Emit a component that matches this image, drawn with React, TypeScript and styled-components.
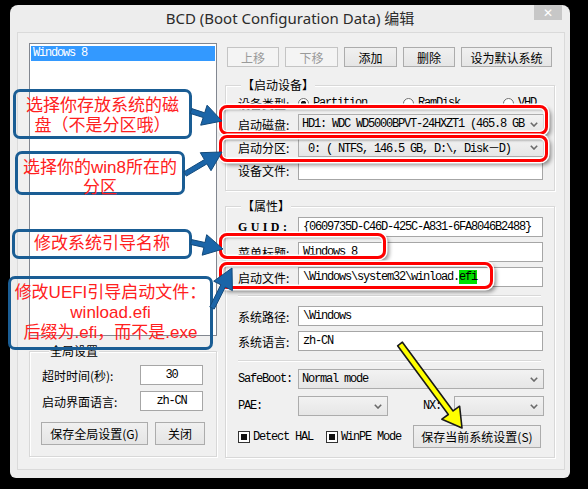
import styled, { createGlobalStyle } from "styled-components";

const cjk = `"Noto Sans CJK SC", "Noto Sans", sans-serif`;
const mono = `"Liberation Mono", "Noto Sans CJK SC", monospace`;

const GlobalStyle = createGlobalStyle`
  html, body {
    margin: 0;
    padding: 0;
    background: #000;
  }
  body {
    width: 588px;
    height: 489px;
    overflow: hidden;
    font-family: ${cjk};
  }
`;

const Stage = styled.div`
  position: relative;
  width: 588px;
  height: 489px;
  padding: 5px 0 0 10px;
  box-sizing: border-box;
  background: #000;
`;

const Window = styled.div`
  width: 560px;
  height: 473px;
  box-sizing: border-box;
  background: #ededed;
  border-radius: 8px 8px 6px 6px;
  display: flex;
  flex-direction: column;
`;

const TitleBar = styled.div`
  height: 27px;
  display: grid;
  grid-template-columns: 1fr auto 1fr;
  align-items: start;
`;

const Title = styled.div`
  grid-column: 2;
  padding-top: 3px;
  font-family: "Noto Sans", "Noto Sans CJK SC", sans-serif;
  font-size: 15px;
  line-height: 20px;
  color: #2b2b2b;
  white-space: nowrap;
`;

const CloseButton = styled.div`
  grid-column: 3;
  justify-self: end;
  width: 28px;
  height: 15px;
  margin-right: 8px;
  background: #c7c7c7;
  color: #fff;
  display: flex;
  align-items: center;
  justify-content: center;
  font-family: "DejaVu Sans", sans-serif;
  font-size: 12px;
`;

const Client = styled.div`
  flex: 1;
  margin: 0 5px 8px 7px;
  border: 1px solid #dadada;
  background: #f0f0f0;
  display: flex;
  gap: 8px;
  padding: 10px 0 0 11px;
`;

const LeftCol = styled.div`
  width: 188px;
  display: flex;
  flex-direction: column;
`;

const RightCol = styled.div`
  width: 330px;
  display: flex;
  flex-direction: column;
  padding-top: 4px;
`;

const ListBox = styled.div`
  height: 293px;
  box-sizing: border-box;
  border: 1px solid #828790;
  background: #fff;
  padding: 2px 1px 0;
`;

const ListItem = styled.div`
  height: 15px;
  line-height: 15px;
  padding-left: 2px;
  background: #3399ff;
  color: #fff;
  font-family: ${mono};
  font-size: 12px;
  letter-spacing: -1.2px;
`;

const Group = styled.div<{ $mt: number; $pb: number }>`
  margin-top: ${(p) => p.$mt}px;
  border: 1px solid #d8d8d8;
  box-shadow: 1px 1px 0 #fff, inset 1px 1px 0 #fff;
  padding: 0 0 ${(p) => p.$pb}px 12px;
  display: flex;
  flex-direction: column;
`;

const Legend = styled.div<{ $ml: number }>`
  align-self: flex-start;
  margin: -9px 0 0 ${(p) => p.$ml}px;
  padding: 0 1px;
  height: 16px;
  line-height: 16px;
  background: #f0f0f0;
  font-size: 12px;
  color: #000;
`;

const Row = styled.div<{ $mt?: number }>`
  display: flex;
  align-items: center;
  height: 20px;
  margin-top: ${(p) => p.$mt ?? 0}px;
`;

const Label = styled.div<{ $w?: number; $mono?: boolean; $spaced?: boolean; $ml?: number }>`
  width: ${(p) => p.$w ?? 60}px;
  flex: none;
  margin-left: ${(p) => p.$ml ?? 0}px;
  font-size: 12px;
  font-family: ${(p) => (p.$spaced ? `"Liberation Serif", serif` : p.$mono ? mono : cjk)};
  font-weight: ${(p) => (p.$spaced ? 700 : 400)};
  letter-spacing: ${(p) => (p.$spaced ? "3.4px" : p.$mono ? "-1.2px" : "0")};
  color: #000;
  white-space: nowrap;
`;

const Field = styled.div<{ $w?: number; $center?: boolean }>`
  width: ${(p) => p.$w ?? 246}px;
  height: 20px;
  box-sizing: border-box;
  border: 1px solid #a6a6a6;
  background: #fff;
  padding-left: ${(p) => (p.$center ? 0 : 4)}px;
  text-align: ${(p) => (p.$center ? "center" : "left")};
  font-family: ${mono};
  font-size: 12px;
  letter-spacing: -1.2px;
  line-height: 18px;
  white-space: nowrap;
  overflow: hidden;
`;

const Highlight = styled.span`
  background: #00e000;
`;

const Combo = styled.div<{ $w?: number }>`
  width: ${(p) => p.$w ?? 246}px;
  height: 20px;
  box-sizing: border-box;
  border: 1px solid #acacac;
  background: linear-gradient(#f2f2f2, #e6e6e6);
  display: flex;
  align-items: center;
  padding: 0 5px 0 3px;
  font-family: ${mono};
  font-size: 12px;
  letter-spacing: -1.2px;
  white-space: pre;
`;

const ComboText = styled.span`
  flex: 1;
  overflow: hidden;
`;

const Button = styled.div<{ $w: number; $h?: number; $off?: boolean }>`
  width: ${(p) => p.$w}px;
  height: ${(p) => p.$h ?? 20}px;
  box-sizing: border-box;
  flex: none;
  border: 1px solid ${(p) => (p.$off ? "#c4c4c4" : "#acacac")};
  background: ${(p) => (p.$off ? "#f4f4f4" : "linear-gradient(#f0f0f0, #e5e5e5)")};
  color: ${(p) => (p.$off ? "#9a9a9a" : "#000")};
  display: flex;
  align-items: center;
  justify-content: center;
  font-size: 12px;
  white-space: nowrap;
`;

const ButtonRow = styled.div<{ $mt?: number; $ml?: number; $gap?: number }>`
  display: flex;
  align-items: center;
  gap: ${(p) => p.$gap ?? 6}px;
  margin: ${(p) => p.$mt ?? 0}px 0 0 ${(p) => p.$ml ?? 0}px;
`;

const Separator = styled.div<{ $mt: number }>`
  height: 1px;
  margin: ${(p) => p.$mt}px 13px 0 0;
  background: #d8d8d8;
  box-shadow: 0 1px 0 #fff;
`;

const RadioItem = styled.div<{ $w: number }>`
  width: ${(p) => p.$w}px;
  display: flex;
  align-items: center;
  gap: 4px;
  font-family: ${mono};
  font-size: 12px;
  letter-spacing: -1.2px;
`;

const RadioDot = styled.span<{ $on?: boolean }>`
  width: 11px;
  height: 11px;
  box-sizing: border-box;
  border-radius: 50%;
  border: 1px solid #707070;
  background: ${(p) => (p.$on ? "radial-gradient(circle, #111 0 2.5px, #fff 3px)" : "#fff")};
`;

const CheckItem = styled.div<{ $w: number }>`
  width: ${(p) => p.$w}px;
  display: flex;
  align-items: center;
  gap: 3px;
  font-family: ${mono};
  font-size: 12px;
  letter-spacing: -1.2px;
`;

const CheckBox = styled.span`
  width: 12px;
  height: 12px;
  box-sizing: border-box;
  border: 1px solid #333;
  background: #fff;
  display: flex;
  align-items: center;
  justify-content: center;
  &::after {
    content: "";
    width: 6px;
    height: 6px;
    background: #111;
  }
`;

/* annotations drawn over the dialog */
const Overlay = styled.div`
  position: absolute;
  inset: 0;
  pointer-events: none;
`;

const Callout = styled.div<{ $x: number; $y: number; $w: number; $h: number; $pt?: number }>`
  position: absolute;
  left: ${(p) => p.$x}px;
  top: ${(p) => p.$y}px;
  width: ${(p) => p.$w}px;
  height: ${(p) => p.$h}px;
  box-sizing: border-box;
  border: 3px solid #1a5d94;
  border-radius: 7px;
  padding-top: ${(p) => p.$pt ?? 0}px;
  display: flex;
  flex-direction: column;
  justify-content: center;
  align-items: center;
  color: #ff2020;
  font-family: "Liberation Sans", "Noto Sans CJK SC", sans-serif;
  font-size: 17px;
  line-height: 20px;
  white-space: nowrap;
`;

const RedFrame = styled.div<{ $x: number; $y: number; $w: number; $h: number }>`
  position: absolute;
  left: ${(p) => p.$x}px;
  top: ${(p) => p.$y}px;
  width: ${(p) => p.$w}px;
  height: ${(p) => p.$h}px;
  box-sizing: border-box;
  border: 3.5px solid #ff0000;
  border-radius: 8px;
  box-shadow: 0 0 0 1.5px #fff, inset 0 0 0 1.5px #fff, 3px 3px 4px rgba(0, 0, 0, 0.45),
    inset 2px 2px 3px rgba(0, 0, 0, 0.35);
`;

const Drawing = styled.svg`
  position: absolute;
  inset: 0;
`;

const arrow = (x1: number, y1: number, x2: number, y2: number, w: number, L: number, H: number) => {
  const len = Math.hypot(x2 - x1, y2 - y1);
  const ux = (x2 - x1) / len;
  const uy = (y2 - y1) / len;
  const nx = -uy;
  const ny = ux;
  const bx = x2 - ux * L;
  const by = y2 - uy * L;
  const pts = [
    [x1 + (nx * w) / 2, y1 + (ny * w) / 2],
    [bx + (nx * w) / 2, by + (ny * w) / 2],
    [bx + (nx * H) / 2, by + (ny * H) / 2],
    [x2, y2],
    [bx - (nx * H) / 2, by - (ny * H) / 2],
    [bx - (nx * w) / 2, by - (ny * w) / 2],
    [x1 - (nx * w) / 2, y1 - (ny * w) / 2],
  ];
  return pts.map((q) => q.map((v) => v.toFixed(1)).join(",")).join(" ");
};

const Chevron = () => (
  <svg width="8" height="5" viewBox="0 0 8 5">
    <polyline points="0.8,0.8 4,4 7.2,0.8" fill="none" stroke="#6a6a6a" strokeWidth="1.6" />
  </svg>
);

const blueArrows = [
  arrow(191, 111, 222, 121, 5, 19, 21),
  arrow(185, 174, 222, 152, 5, 19, 21),
  arrow(191, 242, 223, 249, 5, 19, 21),
  arrow(212, 308, 232, 268, 5, 20, 21),
];

export default function App() {
  return (
    <Stage>
      <GlobalStyle />
      <Window>
        <TitleBar>
          <Title>BCD (Boot Configuration Data) 编辑</Title>
          <CloseButton>✕</CloseButton>
        </TitleBar>
        <Client>
          <LeftCol>
            <ListBox>
              <ListItem>Windows 8</ListItem>
            </ListBox>
            <Group $mt={15} $pb={11}>
              <Legend $ml={7}>全局设置</Legend>
              <Row $mt={6}>
                <Label $w={98}>超时时间(秒):</Label>
                <Field $w={63} $center>
                  30
                </Field>
              </Row>
              <Row $mt={6}>
                <Label $w={98}>启动界面语言:</Label>
                <Field $w={63} $center>
                  zh-CN
                </Field>
              </Row>
              <ButtonRow $mt={11} $ml={-1} $gap={7}>
                <Button $w={107} $h={23}>
                  保存全局设置(G)
                </Button>
                <Button $w={50} $h={23}>
                  关闭
                </Button>
              </ButtonRow>
            </Group>
          </LeftCol>

          <RightCol>
            <ButtonRow $ml={2}>
              <Button $w={52} $off>
                上移
              </Button>
              <Button $w={53} $off>
                下移
              </Button>
              <Button $w={53}>添加</Button>
              <Button $w={52}>删除</Button>
              <Button $w={91}>设为默认系统</Button>
            </ButtonRow>

            <Group $mt={18} $pb={10}>
              <Legend $ml={3}>【启动设备】</Legend>
              <Row>
                <Label>设备类型:</Label>
                <RadioItem $w={105}>
                  <RadioDot $on />
                  Partition
                </RadioItem>
                <RadioItem $w={100}>
                  <RadioDot />
                  RamDisk
                </RadioItem>
                <RadioItem $w={40}>
                  <RadioDot />
                  VHD
                </RadioItem>
              </Row>
              <Row $mt={1}>
                <Label>启动磁盘:</Label>
                <Combo>
                  <ComboText>HD1: WDC WD5000BPVT-24HXZT1 (465.8 GB</ComboText>
                  <Chevron />
                </Combo>
              </Row>
              <Row $mt={3}>
                <Label>启动分区:</Label>
                <Combo>
                  <ComboText> 0: ( NTFS, 146.5 GB, D:\, Disk－D)</ComboText>
                  <Chevron />
                </Combo>
              </Row>
              <Row $mt={3}>
                <Label>设备文件:</Label>
                <Field $w={245} />
              </Row>
            </Group>

            <Group $mt={15} $pb={9}>
              <Legend $ml={3}>【属性】</Legend>
              <Row $mt={3}>
                <Label $spaced>GUID:</Label>
                <Field $w={245}>{"{0609735D-C46D-425C-A831-6FA8046B2488}"}</Field>
              </Row>
              <Row $mt={5}>
                <Label>菜单标题:</Label>
                <Field $w={245}>Windows 8</Field>
              </Row>
              <Row $mt={5}>
                <Label>启动文件:</Label>
                <Field $w={245}>
                  \Windows\system32\winload.<Highlight>efi</Highlight>
                </Field>
              </Row>
              <Separator $mt={8} />
              <Row $mt={10}>
                <Label>系统路径:</Label>
                <Field $w={245}>\Windows</Field>
              </Row>
              <Row $mt={5}>
                <Label>系统语言:</Label>
                <Field $w={245}>zh-CN</Field>
              </Row>
              <Separator $mt={9} />
              <Row $mt={8}>
                <Label $mono>SafeBoot:</Label>
                <Combo>
                  <ComboText>Normal mode</ComboText>
                  <Chevron />
                </Combo>
              </Row>
              <Row $mt={7}>
                <Label $mono>PAE:</Label>
                <Combo $w={90}>
                  <ComboText />
                  <Chevron />
                </Combo>
                <Label $mono $w={31} $ml={35}>
                  NX:
                </Label>
                <Combo $w={90}>
                  <ComboText />
                  <Chevron />
                </Combo>
              </Row>
              <ButtonRow $mt={9} $gap={0}>
                <CheckItem $w={88}>
                  <CheckBox />
                  Detect HAL
                </CheckItem>
                <CheckItem $w={87}>
                  <CheckBox />
                  WinPE Mode
                </CheckItem>
                <Button $w={128} $h={23}>
                  保存当前系统设置(S)
                </Button>
              </ButtonRow>
            </Group>
          </RightCol>
        </Client>
      </Window>

      <Overlay>
        <RedFrame $x={219} $y={105} $w={329} $h={30} />
        <RedFrame $x={219} $y={135} $w={329} $h={27} />
        <RedFrame $x={219} $y={233} $w={167} $h={26} />
        <RedFrame $x={219} $y={262} $w={274} $h={27} />

        <Callout $x={13} $y={89} $w={179} $h={50} $pt={3}>
          <span>选择你存放系统的磁</span>
          <span>盘（不是分区哦）</span>
        </Callout>
        <Callout $x={15} $y={151} $w={170} $h={44} $pt={9}>
          <span>选择你的win8所在的</span>
          <span>分区</span>
        </Callout>
        <Callout $x={12} $y={229} $w={180} $h={30}>
          <span>修改系统引导名称</span>
        </Callout>
        <Callout $x={8} $y={276} $w={205} $h={74}>
          <span>修改UEFI引导启动文件：</span>
          <span>winload.efi</span>
          <span>后缀为.efi，而不是.exe</span>
        </Callout>

        <Drawing width="588" height="489" viewBox="0 0 588 489">
          {blueArrows.map((pts, i) => (
            <polygon key={i} points={pts} fill="#1b65a8" stroke="#124a7c" strokeWidth="1" strokeLinejoin="round" />
          ))}
          <polygon
            points={arrow(400, 344, 462, 428, 6, 19, 22)}
            fill="#ffff00"
            stroke="#1a1a1a"
            strokeWidth="1.6"
            strokeLinejoin="round"
          />
        </Drawing>
      </Overlay>
    </Stage>
  );
}
